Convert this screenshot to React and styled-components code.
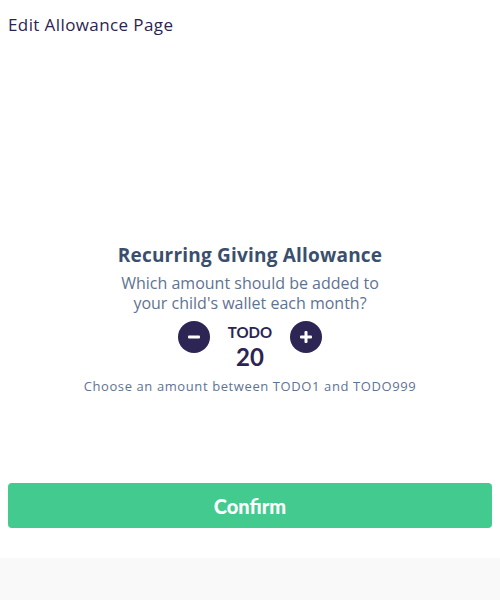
import React, { useState } from "react";
import styled, { createGlobalStyle } from "styled-components";

const GlobalStyle = createGlobalStyle`
  html, body {
    margin: 0;
    padding: 0;
    background: #ffffff;
    font-family: "Open Sans", Lato, sans-serif;
  }
`;

const Page = styled.div`
  display: flex;
  flex-direction: column;
  width: 500px;
  height: 600px;
  overflow: hidden;
`;

const Header = styled.h1`
  margin: 0;
  padding: 14px 8px 0;
  height: 36px;
  font-size: 17px;
  font-weight: 400;
  line-height: 22px;
  letter-spacing: 0.4px;
  color: #2c2452;
`;

const Main = styled.main`
  flex: 1;
  display: flex;
  flex-direction: column;
  align-items: center;
  padding-top: 192px;
  text-align: center;
`;

const Title = styled.h2`
  margin: 0;
  font-size: 19px;
  font-weight: 700;
  line-height: 26px;
  letter-spacing: 0.2px;
  color: #3a4f6e;
`;

const Subtitle = styled.p`
  margin: 5px 0 0;
  font-size: 16px;
  line-height: 20px;
  color: #5f7391;
`;

const Stepper = styled.div`
  display: flex;
  align-items: flex-start;
  gap: 12px;
  margin-top: 8px;
`;

const RoundButton = styled.button`
  display: flex;
  align-items: center;
  justify-content: center;
  width: 32px;
  height: 32px;
  padding: 0;
  border: none;
  border-radius: 50%;
  background: #2d2654;
  cursor: pointer;
`;

const Amount = styled.div`
  display: flex;
  flex-direction: column;
  align-items: center;
  width: 56px;
  margin-top: 3px;
  color: #2c2452;
  font-family: Lato, sans-serif;
  font-weight: 700;
`;

const Currency = styled.span`
  font-size: 15px;
  line-height: 16px;
`;

const Value = styled.span`
  margin-top: 4px;
  font-size: 24px;
  line-height: 26px;
`;

const Hint = styled.p`
  margin: 7px 0 0;
  font-size: 13px;
  line-height: 18px;
  letter-spacing: 0.6px;
  color: #5f7391;
`;

const Actions = styled.div`
  padding: 0 8px 30px;
`;

const ConfirmButton = styled.button`
  width: 100%;
  height: 45px;
  border: none;
  border-radius: 4px;
  background: #43ca8e;
  color: #ffffff;
  font-family: Lato, sans-serif;
  font-size: 20px;
  font-weight: 900;
  cursor: pointer;
`;

const Footer = styled.div`
  height: 42px;
  background: #f9f9f9;
`;

const Minus = () => (
  <svg width="12" height="12" viewBox="0 0 12 12">
    <rect x="0" y="4.5" width="12" height="3" rx="1" fill="#fff" />
  </svg>
);

const Plus = () => (
  <svg width="12" height="12" viewBox="0 0 12 12">
    <rect x="0" y="4.5" width="12" height="3" rx="1" fill="#fff" />
    <rect x="4.5" y="0" width="3" height="12" rx="1" fill="#fff" />
  </svg>
);

export default function App() {
  const [amount, setAmount] = useState(20);
  return (
    <>
      <GlobalStyle />
      <Page>
        <Header>Edit Allowance Page</Header>
        <Main>
          <Title>Recurring Giving Allowance</Title>
          <Subtitle>
            Which amount should be added to
            <br />
            your child's wallet each month?
          </Subtitle>
          <Stepper>
            <RoundButton onClick={() => setAmount((a) => Math.max(1, a - 1))}>
              <Minus />
            </RoundButton>
            <Amount>
              <Currency>TODO</Currency>
              <Value>{amount}</Value>
            </Amount>
            <RoundButton onClick={() => setAmount((a) => Math.min(999, a + 1))}>
              <Plus />
            </RoundButton>
          </Stepper>
          <Hint>Choose an amount between TODO1 and TODO999</Hint>
        </Main>
        <Actions>
          <ConfirmButton>Confirm</ConfirmButton>
        </Actions>
        <Footer />
      </Page>
    </>
  );
}
